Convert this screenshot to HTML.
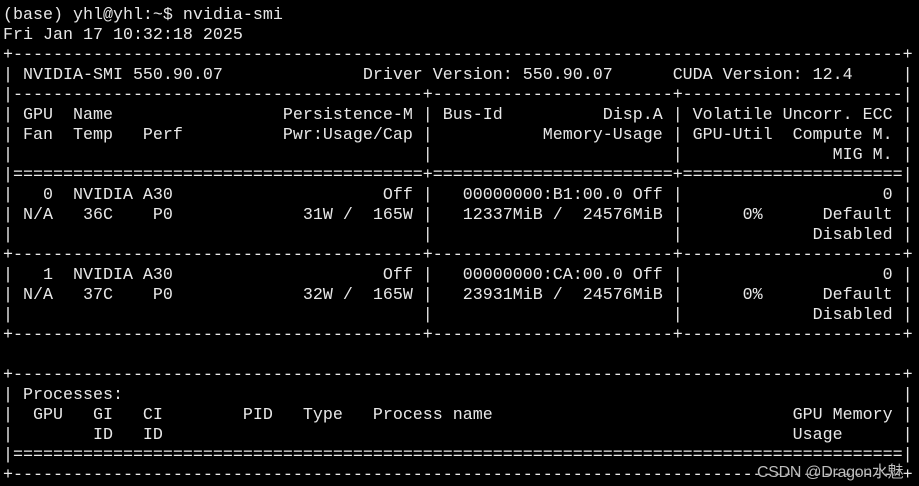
<!DOCTYPE html>
<html><head><meta charset="utf-8">
<style>
html,body{margin:0;padding:0;background:#000;width:919px;height:484px;overflow:hidden;}
pre{position:absolute;left:3px;top:6px;margin:0;font-family:"Liberation Mono","DejaVu Sans Mono",monospace;font-size:16.67px;line-height:20px;color:#e8e8e8;white-space:pre;}
#wm{position:absolute;left:757px;top:458px;font-family:"Liberation Sans","Noto Sans CJK SC",sans-serif;font-size:16px;color:#bdbdbd;text-shadow:0 0 2px #000;letter-spacing:-0.3px;}
</style></head><body>
<pre id="t"></pre>
<div id="wm">CSDN @Dragon水魅</div>
<script>
function L(items){var a=new Array(91).fill(' ');for(var i=0;i<items.length;i+=2){var p=items[i],s=items[i+1];for(var j=0;j<s.length;j++)a[p+j]=s[j];}return a.join('').replace(/\s+$/,'');}
var dash='+'+'-'.repeat(89)+'+';
var sep='|'+'-'.repeat(41)+'+'+'-'.repeat(24)+'+'+'-'.repeat(22)+'|';
var plus='+'+'-'.repeat(41)+'+'+'-'.repeat(24)+'+'+'-'.repeat(22)+'+';
var eq='|'+'='.repeat(41)+'+'+'='.repeat(24)+'+'+'='.repeat(22)+'|';
var bars=[0,'|',42,'|',67,'|',90,'|'];
function R(x){return L(bars.concat(x));}
function e(p,s){return [p-s.length+1,s];}
var lines=[
'(base) yhl@yhl:~$ nvidia-smi',
'Fri Jan 17 10:32:18 2025',
dash,
L([0,'|',2,'NVIDIA-SMI 550.90.07',36,'Driver Version: 550.90.07',67,'CUDA Version: 12.4',90,'|']),
sep,
R([2,'GPU',7,'Name'].concat(e(40,'Persistence-M'),[44,'Bus-Id'],e(65,'Disp.A'),[69,'Volatile Uncorr. ECC'])),
R([2,'Fan',7,'Temp',14,'Perf'].concat(e(40,'Pwr:Usage/Cap'),e(65,'Memory-Usage'),[69,'GPU-Util',79,'Compute M.'])),
R(e(88,'MIG M.')),
eq,
R([4,'0',7,'NVIDIA A30'].concat(e(40,'Off'),[46,'00000000:B1:00.0 Off'],e(88,'0'))),
R([2,'N/A',8,'36C',15,'P0',30,'31W /  165W',46,'12337MiB /  24576MiB'].concat(e(75,'0%'),e(88,'Default'))),
R(e(88,'Disabled')),
plus,
R([4,'1',7,'NVIDIA A30'].concat(e(40,'Off'),[46,'00000000:CA:00.0 Off'],e(88,'0'))),
R([2,'N/A',8,'37C',15,'P0',30,'32W /  165W',46,'23931MiB /  24576MiB'].concat(e(75,'0%'),e(88,'Default'))),
R(e(88,'Disabled')),
plus,
'',
dash,
L([0,'|',2,'Processes:',90,'|']),
L([0,'|',3,'GPU',9,'GI',14,'CI',24,'PID',30,'Type',37,'Process name',79,'GPU Memory',90,'|']),
L([0,'|',9,'ID',14,'ID',79,'Usage',90,'|']),
'|'+'='.repeat(89)+'|',
dash
];
document.getElementById('t').textContent=lines.join('\n');
</script>
</body></html>
